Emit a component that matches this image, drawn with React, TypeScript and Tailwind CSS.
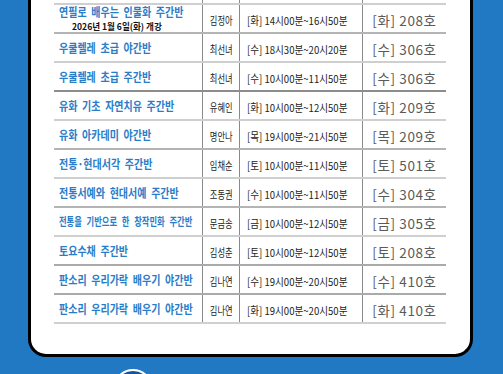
import React from "react";

type Row = {
  title: string;
  sub?: string;
  teacher: string;
  time: string;
  room: string;
  line: string;
  small?: boolean;
};

const rows: Row[] = [
  { title: "연필로 배우는 인물화 주간반", sub: "2026년 1월 6일(화) 개강", teacher: "김정아", time: "[화] 14시00분~16시50분", room: "[화] 208호", line: "border-[#cfcfcf]" },
  { title: "우쿨렐레 초급 야간반", teacher: "최선녀", time: "[수] 18시30분~20시20분", room: "[수] 306호", line: "border-[#b4b4b4]" },
  { title: "우쿨렐레 초급 주간반", teacher: "최선녀", time: "[수] 10시00분~11시50분", room: "[수] 306호", line: "border-[#cfcfcf]" },
  { title: "유화 기초 자연치유 주간반", teacher: "유혜인", time: "[화] 10시00분~12시50분", room: "[화] 209호", line: "border-[#8c8c8c]" },
  { title: "유화 아카데미 야간반", teacher: "명안나", time: "[목] 19시00분~21시50분", room: "[목] 209호", line: "border-[#cfcfcf]" },
  { title: "전통·현대서각 주간반", teacher: "임채순", time: "[토] 10시00분~11시50분", room: "[토] 501호", line: "border-[#b4b4b4]" },
  { title: "전통서예와 현대서예 주간반", teacher: "조동권", time: "[수] 10시00분~11시50분", room: "[수] 304호", line: "border-[#cfcfcf]" },
  { title: "전통을 기반으로 한 창작민화 주간반", teacher: "문금송", time: "[금] 10시00분~12시50분", room: "[금] 305호", line: "border-[#b4b4b4]", small: true },
  { title: "토요수채 주간반", teacher: "김성춘", time: "[토] 10시00분~12시50분", room: "[토] 208호", line: "border-[#cfcfcf]" },
  { title: "판소리 우리가락 배우기 야간반", teacher: "김나연", time: "[수] 19시00분~20시50분", room: "[수] 410호", line: "border-[#aaaaaa]" },
  { title: "판소리 우리가락 배우기 야간반", teacher: "김나연", time: "[화] 19시00분~20시50분", room: "[화] 410호", line: "border-[#aaaaaa]" },
];

function ClassRow({ row }: { row: Row }) {
  return (
    <div className={`flex h-[29px] border-t-2 ${row.line}`}>
      <div
        className={
          row.sub
            ? "w-[148px] pl-[5px] pt-[1px] flex flex-col whitespace-nowrap"
            : "w-[148px] pl-[5px] flex flex-col justify-center whitespace-nowrap"
        }
      >
        <span
          className={
            row.small
              ? "block origin-left scale-x-[0.72] text-[11.5px] leading-[13px] font-bold text-[#2a7cc8] [word-spacing:4px]"
              : row.sub
                ? "block origin-left scale-x-[0.8] text-[12.5px] leading-[12px] font-bold text-[#2a7cc8] [word-spacing:3px]"
                : "block origin-left scale-x-[0.8] text-[12.5px] leading-[13px] font-bold text-[#2a7cc8] [word-spacing:3px]"
          }
        >
          {row.title}
        </span>
        {row.sub && (
          <span className="block mt-[4px] ml-[13px] origin-left scale-x-[0.95] text-[9px] leading-[9px] font-bold text-[#111]">
            {row.sub}
          </span>
        )}
      </div>
      <div className="w-[37px] border-l border-[#8a8a8a] flex items-center justify-center pt-[3px] whitespace-nowrap">
        <span className="inline-block scale-x-[0.75] text-[11px] text-[#222]">{row.teacher}</span>
      </div>
      <div className="w-[123px] border-l border-[#8a8a8a] flex items-center pl-[7px] pt-[3px] whitespace-nowrap">
        <span className="inline-block origin-left scale-x-[0.87] text-[11px] text-[#222]">{row.time}</span>
      </div>
      <div className="flex-1 border-l border-[#8a8a8a] flex items-center justify-center pt-[3px] whitespace-nowrap">
        <span className="text-[13.5px] tracking-[0.6px] text-[#5a5a5a]">{row.room}</span>
      </div>
    </div>
  );
}

export default function App() {
  return (
    <div className="w-[503px] h-[374px] overflow-hidden bg-[#2179c3] font-['Noto_Sans_CJK_KR',sans-serif]">
      <div className="ml-[28px] w-[445px] bg-white border-x-[3px] border-b-[3px] border-black rounded-b-[18px] pl-[23px] pr-[24px] pb-[30px]">
        <div className="w-[392px]">
          {/* bottom of the header row, cut off by the frame */}
          <div className="flex h-[3px]">
            <div className="w-[148px]" />
            <div className="w-[37px] border-l border-[#8a8a8a]" />
            <div className="w-[123px] border-l border-[#8a8a8a]" />
            <div className="flex-1 border-l border-[#8a8a8a]" />
          </div>
          {rows.map((row, i) => (
            <ClassRow key={i} row={row} />
          ))}
          <div className="border-t-2 border-[#d0d0d0]" />
        </div>
      </div>
      <div className="ml-[113px] mt-[12px] w-[40px] h-[40px] rounded-full border-2 border-white bg-[#1c4f9c]" />
    </div>
  );
}
